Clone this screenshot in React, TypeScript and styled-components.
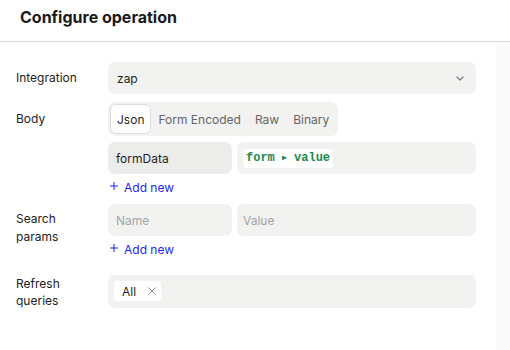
import React from 'react';
import styled, { createGlobalStyle } from 'styled-components';

const GlobalStyle = createGlobalStyle`
  html, body {
    margin: 0;
    padding: 0;
    background: #ffffff;
    font-family: Inter, "Noto Sans", sans-serif;
    color: #1f1f1f;
  }
`;

const Page = styled.div`
  width: 510px;
  height: 350px;
  display: flex;
  flex-direction: column;
  overflow: hidden;
`;

const Header = styled.div`
  height: 42px;
  flex-shrink: 0;
  box-sizing: border-box;
  border-bottom: 1px solid #d6d6d6;
  display: flex;
  align-items: center;
  padding: 0 0 7px 20px;
`;

const Title = styled.h1`
  margin: 0;
  font-size: 16px;
  font-weight: 700;
  color: #1a1a1a;
`;

const Body = styled.div`
  flex: 1;
  display: flex;
`;

const Form = styled.div`
  width: 496px;
  box-sizing: border-box;
  padding: 20px 20px 0 16px;
  display: flex;
  flex-direction: column;
`;

const Side = styled.div`
  flex: 1;
  background: #fafafa;
`;

const Row = styled.div<{ $gap: number }>`
  display: grid;
  grid-template-columns: 92px 368px;
  margin-bottom: ${({ $gap }) => $gap}px;
`;

const Label = styled.div<{ $top?: number; $lh?: number }>`
  font-size: 12px;
  line-height: ${({ $lh }) => $lh ?? 18}px;
  padding-top: ${({ $top }) => $top ?? 7}px;
  color: #222;
`;

const Field = styled.div`
  display: flex;
  flex-direction: column;
`;

const Select = styled.div`
  height: 32px;
  border-radius: 7px;
  background: #f2f2f1;
  display: flex;
  align-items: center;
  justify-content: space-between;
  padding: 0 12px 0 9px;
  font-size: 12px;
  color: #1f1f1f;
`;

const Tabs = styled.div`
  align-self: flex-start;
  height: 34px;
  box-sizing: border-box;
  padding: 2px;
  border-radius: 7px;
  background: #f2f2f1;
  display: flex;
`;

const Tab = styled.div<{ $active?: boolean }>`
  display: flex;
  align-items: center;
  padding: 0 6px;
  font-size: 12px;
  border-radius: 6px;
  box-sizing: border-box;
  color: ${({ $active }) => ($active ? '#1f1f1f' : '#666')};
  background: ${({ $active }) => ($active ? '#fff' : 'transparent')};
  border: 1px solid ${({ $active }) => ($active ? '#dcdcdc' : 'transparent')};
`;

const Pair = styled.div<{ $top?: number }>`
  display: grid;
  grid-template-columns: 124px 239px;
  column-gap: 5px;
  margin-top: ${({ $top }) => $top ?? 0}px;
`;

const Input = styled.div<{ $filled?: boolean; $pad?: number }>`
  height: 32px;
  border-radius: 7px;
  background: ${({ $filled }) => ($filled ? '#ececeb' : '#f2f2f1')};
  display: flex;
  align-items: center;
  padding-left: ${({ $pad }) => $pad ?? 8}px;
  font-size: 12px;
  color: #1f1f1f;
`;

const Placeholder = styled.span`
  color: #a3a3a3;
`;

const Code = styled.span`
  background: #fff;
  border-radius: 4px;
  padding: 1px 3px 2px;
  font-family: "Liberation Mono", "DejaVu Sans Mono", monospace;
  font-weight: 700;
  font-size: 12px;
  line-height: 16px;
  color: #1d8a52;
`;

const Arrow = styled.span`
  font-size: 8px;
  vertical-align: 1px;
`;

const AddRow = styled.div`
  margin-top: 4px;
  height: 18px;
  display: flex;
  align-items: center;
  gap: 6px;
  padding-left: 2px;
  font-size: 12px;
  color: #1f1ff0;
`;

const PlusIcon = styled.svg`
  margin-top: -3px;
`;

const Multi = styled.div`
  height: 33px;
  box-sizing: border-box;
  border-radius: 7px;
  background: #f2f2f1;
  padding: 6px;
  display: flex;
  align-items: flex-start;
`;

const Chip = styled.div`
  height: 20px;
  background: #fff;
  border-radius: 3px;
  display: flex;
  align-items: center;
  gap: 12px;
  padding: 0 5px 0 8px;
  font-size: 12px;
  color: #1f1f1f;
`;

const Chevron = () => (
  <svg width="8" height="5" viewBox="0 0 8 5" fill="none">
    <path d="M1 1l3 3 3-3" stroke="#7a7a7a" strokeWidth="1.2" strokeLinecap="round" strokeLinejoin="round" />
  </svg>
);

const Plus = () => (
  <PlusIcon width="8" height="8" viewBox="0 0 8 8">
    <path d="M4 0v8M0 4h8" stroke="#1f1ff0" strokeWidth="1" />
  </PlusIcon>
);

const Cross = () => (
  <svg width="8" height="8" viewBox="0 0 8 8">
    <path d="M0.5 0.5l7 7M7.5 0.5l-7 7" stroke="#8a8a8a" strokeWidth="1" />
  </svg>
);

const AddNew = () => (
  <AddRow>
    <Plus />
    Add new
  </AddRow>
);

export default function App() {
  return (
    <Page>
      <GlobalStyle />
      <Header>
        <Title>Configure operation</Title>
      </Header>
      <Body>
        <Form>
          <Row $gap={8}>
            <Label>Integration</Label>
            <Select>
              zap
              <Chevron />
            </Select>
          </Row>
          <Row $gap={8}>
            <Label $top={8}>Body</Label>
            <Field>
              <Tabs>
                <Tab $active>Json</Tab>
                <Tab>Form Encoded</Tab>
                <Tab>Raw</Tab>
                <Tab>Binary</Tab>
              </Tabs>
              <Pair $top={6}>
                <Input $filled>formData</Input>
                <Input $pad={6}>
                  <Code>
                    form <Arrow>▶</Arrow> value
                  </Code>
                </Input>
              </Pair>
              <AddNew />
            </Field>
          </Row>
          <Row $gap={17}>
            <Label $top={6}>
              Search
              <br />
              params
            </Label>
            <Field>
              <Pair>
                <Input>
                  <Placeholder>Name</Placeholder>
                </Input>
                <Input $pad={6}>
                  <Placeholder>Value</Placeholder>
                </Input>
              </Pair>
              <AddNew />
            </Field>
          </Row>
          <Row $gap={0}>
            <Label $top={0} $lh={17}>
              Refresh
              <br />
              queries
            </Label>
            <Multi>
              <Chip>
                All
                <Cross />
              </Chip>
            </Multi>
          </Row>
        </Form>
        <Side />
      </Body>
    </Page>
  );
}
